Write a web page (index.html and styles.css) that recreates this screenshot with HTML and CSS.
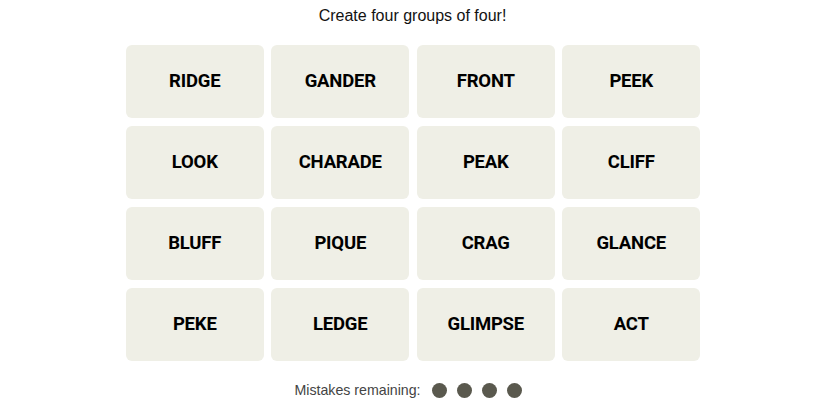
FILE: index.html
```html
<!DOCTYPE html>
<html>
<head>
<meta charset="utf-8">
<link rel="stylesheet" href="styles.css">
</head>
<body>
<div class="page">
  <p class="title">Create four groups of four!</p>
  <div class="board">
    <div class="tile">RIDGE</div>
    <div class="tile">GANDER</div>
    <div class="tile">FRONT</div>
    <div class="tile">PEEK</div>
    <div class="tile">LOOK</div>
    <div class="tile">CHARADE</div>
    <div class="tile">PEAK</div>
    <div class="tile">CLIFF</div>
    <div class="tile">BLUFF</div>
    <div class="tile">PIQUE</div>
    <div class="tile">CRAG</div>
    <div class="tile">GLANCE</div>
    <div class="tile">PEKE</div>
    <div class="tile">LEDGE</div>
    <div class="tile">GLIMPSE</div>
    <div class="tile">ACT</div>
  </div>
  <div class="mistakes">
    <span class="label">Mistakes remaining:</span>
    <span class="dots">
      <span class="dot"></span><span class="dot"></span><span class="dot"></span><span class="dot"></span>
    </span>
  </div>
</div>
</body>
</html>
```
FILE: styles.css
```css
html, body {
  margin: 0;
  padding: 0;
  background: #ffffff;
}
.page {
  width: 825px;
  height: 413px;
  display: flex;
  flex-direction: column;
  align-items: center;
  font-family: "Liberation Sans", Arial, sans-serif;
}
.title {
  margin: 6px 0 0 0;
  height: 20px;
  line-height: 20px;
  font-size: 16px;
  color: #121212;
}
.board {
  margin-top: 19px;
  margin-left: 1px;
  display: grid;
  grid-template-columns: repeat(4, 138px);
  grid-auto-rows: 73px;
  gap: 8px 7.5px;
}
.tile {
  background: #efefe6;
  border-radius: 6px;
  display: flex;
  align-items: center;
  justify-content: center;
  padding-bottom: 2px;
  box-sizing: border-box;
  font-family: Roboto, "Liberation Sans", sans-serif;
  font-weight: 700;
  font-size: 18.5px;
  letter-spacing: -0.2px;
  color: #000000;
}
.mistakes {
  margin-top: 20px;
  margin-right: 9px;
  display: flex;
  align-items: center;
  gap: 11px;
  font-size: 14.2px;
  color: #444444;
}
.label {
  line-height: 18px;
}
.dots {
  display: flex;
  gap: 10px;
}
.dot {
  width: 15px;
  height: 15px;
  border-radius: 50%;
  background: #5a594e;
}
```
